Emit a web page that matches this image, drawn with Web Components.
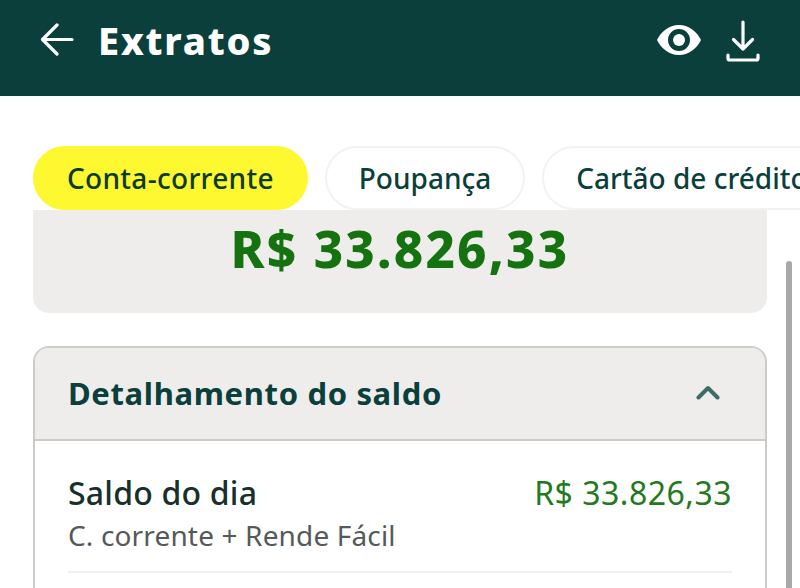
<!DOCTYPE html>
<html lang="pt-BR">
<head>
<meta charset="utf-8">
<title>Extratos</title>
<style>
  html, body { margin: 0; height: 100%; overflow: hidden; background: #fff; }
  body { font-family: "Noto Sans", sans-serif; position: relative; }
</style>
</head>
<body>
<app-header>Extratos</app-header>
<tab-bar>
  <tab-chip active>Conta-corrente</tab-chip>
  <tab-chip>Poupança</tab-chip>
  <tab-chip>Cartão de crédito</tab-chip>
</tab-bar>
<balance-card>R$ 33.826,33</balance-card>
<detail-card heading="Detalhamento do saldo">
  <detail-row label="Saldo do dia" note="C. corrente + Rende Fácil" value="R$ 33.826,33"></detail-row>
</detail-card>
<scroll-thumb></scroll-thumb>

<script>
class AppHeader extends HTMLElement {
  constructor() {
    super();
    this.attachShadow({ mode: "open" });
  }

  connectedCallback() {
    this.shadowRoot.innerHTML = `
      <style>
        :host {
          display: flex;
          align-items: center;
          height: 96px;
          padding: 0 40px 17px 40px;
          box-sizing: border-box;
          background: #0a3f3c;
          color: #fff;
        }
        .back { width: 34px; height: 33px; flex: none; }
        .title {
          margin-left: 24px;
          font-size: 38px;
          font-weight: 800;
          letter-spacing: 1.8px;
          line-height: 44px;
          flex: 1;
        }
        .eye { width: 46px; height: 32px; flex: none; }
        .download { width: 34px; height: 42px; flex: none; margin-left: 24px; margin-top: 3px; }
      </style>
      <svg class="back" viewBox="0 0 34 33" fill="none" stroke="#fff" stroke-width="3.2" stroke-linecap="round" stroke-linejoin="round">
        <path d="M32 16.500H3M17 2L2.500 16.500L17 31"/>
      </svg>
      <span class="title"><slot></slot></span>
      <svg class="eye" viewBox="0 0 46 32">
        <path fill="#fff" fill-rule="evenodd" d="M23 1C12.500 1 4.500 8.500 1 16c3.500 7.500 11.500 15 22 15s18.500-7.500 22-15C41.500 8.500 33.500 1 23 1zm0 4a11 11 0 1 1 0 22 11 11 0 0 1 0-22z"/>
        <circle cx="23" cy="16" r="6" fill="#fff"/>
      </svg>
      <svg class="download" viewBox="0 0 34 42" fill="none" stroke="#fff" stroke-width="3.2" stroke-linecap="round" stroke-linejoin="round">
        <path d="M17 2V29M7.500 19.500L17 29L26.500 19.500"/>
        <path d="M2 35V38.500a1.500 1.500 0 0 0 1.500 1.500H30.500a1.500 1.500 0 0 0 1.500-1.500V35"/>
      </svg>
    `;
  }
}

class TabBar extends HTMLElement {
  constructor() {
    super();
    this.attachShadow({ mode: "open" });
  }

  connectedCallback() {
    this.shadowRoot.innerHTML = `
      <style>
        :host {
          display: flex;
          gap: 17px;
          padding: 50px 0 0 33px;
          height: 64px;
          overflow: hidden;
          white-space: nowrap;
          position: relative;
          z-index: 1;
        }
      </style>
      <slot></slot>
    `;
  }
}

class TabChip extends HTMLElement {
  constructor() {
    super();
    this.attachShadow({ mode: "open" });
  }

  connectedCallback() {
    this.shadowRoot.innerHTML = `
      <style>
        :host {
          display: flex;
          align-items: center;
          flex: none;
          height: 64px;
          padding: 0 32px;
          box-sizing: border-box;
          border: 2px solid #f3f2f1;
          border-radius: 32px;
          background: #fff;
          color: #0a3f3c;
          font-size: 28px;
          font-weight: 500;
        }
        :host([active]) {
          background: #fdf82f;
          border-color: #fdf82f;
          color: #0d3a2e;
          letter-spacing: 0.3px;
        }
      </style>
      <slot></slot>
    `;
  }
}

class BalanceCard extends HTMLElement {
  constructor() {
    super();
    this.attachShadow({ mode: "open" });
  }

  connectedCallback() {
    this.shadowRoot.innerHTML = `
      <style>
        :host {
          display: block;
          margin: 0 33px;
          height: 103px;
          padding-top: 6px;
          box-sizing: border-box;
          background: #eeedec;
          border-radius: 0 0 16px 16px;
          text-align: center;
          color: #14720f;
          font-size: 51px;
          font-weight: 800;
          letter-spacing: 2.2px;
          line-height: 64px;
        }
      </style>
      <slot></slot>
    `;
  }
}

class DetailCard extends HTMLElement {
  constructor() {
    super();
    this.attachShadow({ mode: "open" });
  }

  connectedCallback() {
    this.shadowRoot.innerHTML = `
      <style>
        :host {
          display: block;
          margin: 33px 33px 0;
          height: 242px;
          box-sizing: border-box;
          overflow: hidden;
          border: 2px solid #cdcbc8;
          border-bottom: 0;
          border-radius: 16px 16px 0 0;
          background: #fff;
        }
        .head {
          display: flex;
          align-items: center;
          justify-content: space-between;
          height: 89px;
          padding: 0 45px 2px 33px;
          background: #eeedec;
          border-bottom: 2px solid #cdcbc8;
          color: #0a3f3c;
          font-size: 31px;
          font-weight: 700;
          letter-spacing: 0.65px;
        }
        svg { width: 24px; height: 15px; flex: none; }
      </style>
      <div class="head">
        <span>${this.getAttribute("heading")}</span>
        <svg viewBox="0 0 24 15" fill="none" stroke="#3f6b66" stroke-width="4" stroke-linecap="round" stroke-linejoin="round">
          <path d="M2.500 12.500L12 3L21.500 12.500"/>
        </svg>
      </div>
      <slot></slot>
    `;
  }
}

class DetailRow extends HTMLElement {
  constructor() {
    super();
    this.attachShadow({ mode: "open" });
  }

  connectedCallback() {
    this.shadowRoot.innerHTML = `
      <style>
        :host {
          display: block;
          margin: 0 33px;
          padding-top: 31px;
          height: 132px;
          box-sizing: border-box;
          border-bottom: 2px solid #f1f0ef;
        }
        .top { display: flex; justify-content: space-between; align-items: baseline; }
        .label { font-size: 32px; font-weight: 500; letter-spacing: 0.2px; color: #17302c; line-height: 42px; }
        .value { font-size: 32px; letter-spacing: 0.5px; color: #237a1e; line-height: 42px; }
        .note { font-size: 28px; letter-spacing: 0.15px; color: #55595a; line-height: 43px; }
      </style>
      <div class="top">
        <span class="label">${this.getAttribute("label")}</span>
        <span class="value">${this.getAttribute("value")}</span>
      </div>
      <div class="note">${this.getAttribute("note")}</div>
    `;
  }
}

// sits over the content, like the native overlay scrollbar
class ScrollThumb extends HTMLElement {
  constructor() {
    super();
    this.attachShadow({ mode: "open" });
  }

  connectedCallback() {
    this.shadowRoot.innerHTML = `
      <style>
        :host {
          position: absolute;
          left: 786px;
          top: 261px;
          bottom: 0;
          width: 6px;
          background: #a9a9a9;
          border-radius: 3px 3px 0 0;
        }
      </style>
    `;
  }
}

customElements.define("app-header", AppHeader);
customElements.define("tab-bar", TabBar);
customElements.define("tab-chip", TabChip);
customElements.define("balance-card", BalanceCard);
customElements.define("detail-card", DetailCard);
customElements.define("detail-row", DetailRow);
customElements.define("scroll-thumb", ScrollThumb);
</script>
</body>
</html>
